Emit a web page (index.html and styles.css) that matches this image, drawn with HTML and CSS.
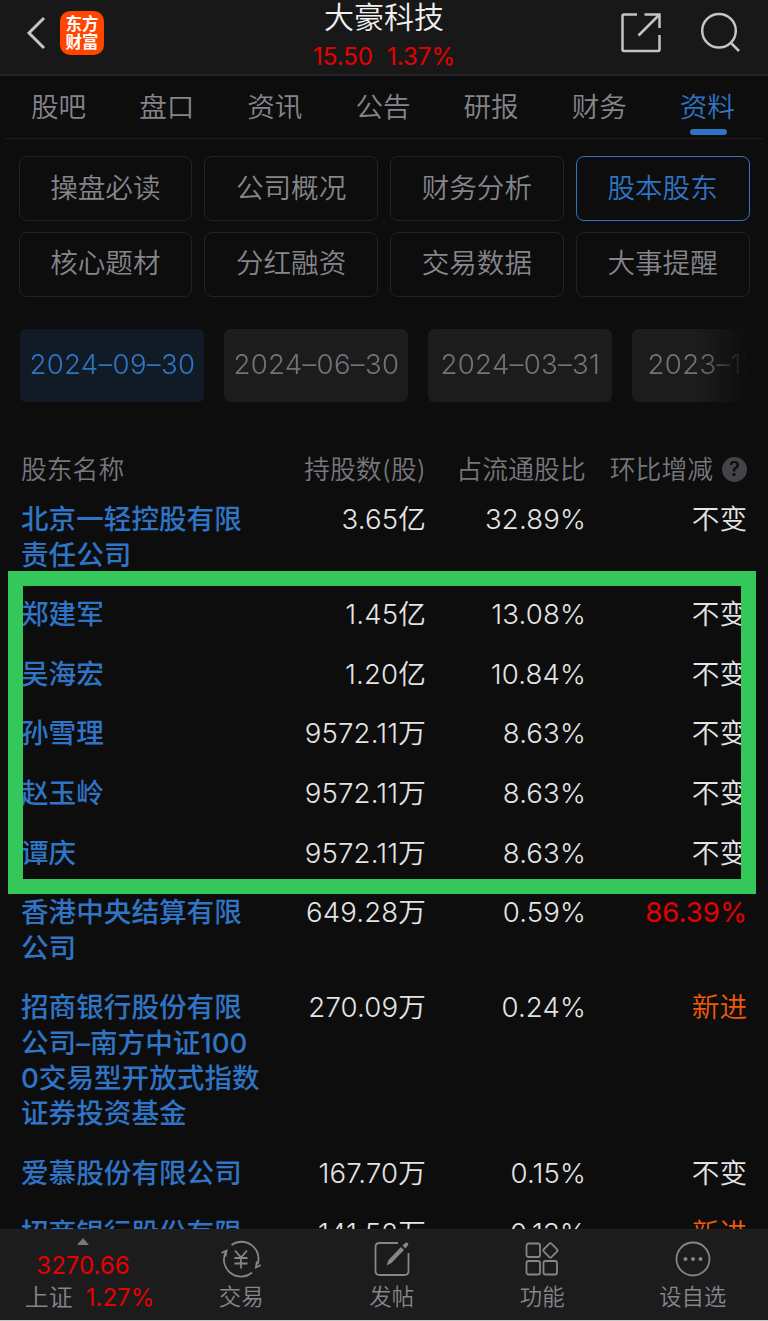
FILE: index.html
```html
<!DOCTYPE html>
<html lang="zh-CN">
<head>
  <meta charset="UTF-8" />
  <meta name="viewport" content="width=device-width, initial-scale=1.0" />
  <title>大豪科技 - 股本股东</title>
  <link rel="stylesheet" href="styles.css">
</head>
<body>
  <div class="app">
    <header class="header">
      <div class="header-side">
        <svg class="back" width="20" height="34" viewBox="0 0 20 34"><path d="M18 2L3 17l15 15" /></svg>
        <div class="logo"><span>东方</span><span>财富</span></div>
      </div>
      <div class="stock">
        <h1>大豪科技</h1>
        <p><span>15.50</span><span>1.37%</span></p>
      </div>
      <div class="header-side right">
        <svg class="icon" width="42" height="42" viewBox="0 0 42 42"><path d="M17 2.500H4Q2.500 2.500 2.500 4V37.500Q2.500 39 4 39H38Q39.500 39 39.500 37.500V23M24.500 2.500H39.500V16M39 3L18.500 23.500" /></svg>
        <svg class="icon" width="42" height="42" viewBox="0 0 42 42"><circle cx="19" cy="18.800" r="16.800" /><path d="M30.500 30.500L39 39" /></svg>
      </div>
    </header>

    <nav class="tabs">
      <a>股吧</a>
      <a>盘口</a>
      <a>资讯</a>
      <a>公告</a>
      <a>研报</a>
      <a>财务</a>
      <a class="active">资料</a>
    </nav>

    <div class="menu">
      <button>操盘必读</button>
      <button>公司概况</button>
      <button>财务分析</button>
      <button class="active">股本股东</button>
      <button>核心题材</button>
      <button>分红融资</button>
      <button>交易数据</button>
      <button>大事提醒</button>
    </div>

    <div class="dates">
      <span class="date active">2024–09–30</span>
      <span class="date">2024–06–30</span>
      <span class="date">2024–03–31</span>
      <span class="date">2023–12–31</span>
    </div>

    <main class="holders">
      <div class="row head">
        <span>股东名称</span>
        <span>持股数(股)</span>
        <span>占流通股比</span>
        <span class="change">环比增减<i class="help">?</i></span>
      </div>
      <div class="row"><span class="name">北京一轻控股有限责任公司</span><span>3.65亿</span><span>32.89%</span><span>不变</span></div>
      <div class="marked">
        <div class="row"><span class="name">郑建军</span><span>1.45亿</span><span>13.08%</span><span>不变</span></div>
        <div class="row"><span class="name">吴海宏</span><span>1.20亿</span><span>10.84%</span><span>不变</span></div>
        <div class="row"><span class="name">孙雪理</span><span>9572.11万</span><span>8.63%</span><span>不变</span></div>
        <div class="row"><span class="name">赵玉岭</span><span>9572.11万</span><span>8.63%</span><span>不变</span></div>
        <div class="row"><span class="name">谭庆</span><span>9572.11万</span><span>8.63%</span><span>不变</span></div>
      </div>
      <div class="row"><span class="name">香港中央结算有限公司</span><span>649.28万</span><span>0.59%</span><span class="up">86.39%</span></div>
      <div class="row"><span class="name">招商银行股份有限公司–南方中证1000交易型开放式指数证券投资基金</span><span>270.09万</span><span>0.24%</span><span class="new">新进</span></div>
      <div class="row"><span class="name">爱慕股份有限公司</span><span>167.70万</span><span>0.15%</span><span>不变</span></div>
      <div class="row"><span class="name">招商银行股份有限</span><span>141.52万</span><span>0.13%</span><span class="new">新进</span></div>
    </main>

    <footer class="footer">
      <div class="index">
        <i class="arrow"></i>
        <span class="up">3270.66</span>
        <span class="market">上证<b class="up">1.27%</b></span>
      </div>
      <div class="item">
        <svg width="42" height="38" viewBox="0 0 42 38"><path d="M11.500 5A17 17 0 0 1 37.500 24.500M40.800 25L36 27.500L36.800 21.500M32 32.500A17 17 0 0 1 6 11.500M1.500 13L6.500 10.500L5.500 16.500M15 10.500l6 7 6-7M14.500 18h13M14.500 23.500h13M21 17.500v11" /></svg>
        <span>交易</span>
      </div>
      <div class="item">
        <svg width="42" height="38" viewBox="0 0 42 38"><path d="M27 3H8.500Q4.500 3 4.500 7V31Q4.500 35 8.500 35H33.500Q37.500 35 37.500 31V13" /><path class="fill" d="M15.500 25.500l2-5.500L30 7l3 3L20.500 23zM31.500 5.500L34.500 2.800q1-.8 2.200.3t.3 2.200L34.500 8.500z" /></svg>
        <span>发帖</span>
      </div>
      <div class="item">
        <svg width="42" height="38" viewBox="0 0 42 38"><rect x="5.500" y="3.500" width="13.500" height="13.500" rx="2" /><rect x="5.500" y="21" width="13.500" height="13.500" rx="2" /><rect x="22.500" y="21" width="13.500" height="13.500" rx="2" /><rect x="23.900" y="4.900" width="11" height="11" rx="1.500" transform="rotate(45 29.400 10.400)" /></svg>
        <span>功能</span>
      </div>
      <div class="item">
        <svg width="42" height="38" viewBox="0 0 42 38"><circle cx="21" cy="19" r="16.500" /><g class="fill"><circle cx="13.500" cy="19" r="2" /><circle cx="21" cy="19" r="2" /><circle cx="28.500" cy="19" r="2" /></g></svg>
        <span>设自选</span>
      </div>
    </footer>
  </div>
</body>
</html>
```
FILE: styles.css
```css
*,
*::after {
  box-sizing: border-box;
}
body {
  margin: 0;
  background: #0d0d0d;
  color: #e4e4e4;
  font-family: Inter, "Noto Sans CJK SC", sans-serif;
  font-size: 27.6px;
  font-weight: 350;
}
.app {
  display: flex;
  flex-direction: column;
  height: 1321px;
  overflow: hidden;
}
.header {
  display: flex;
  justify-content: space-between;
  height: 76px;
  flex: none;
  padding: 0 26px;
  background: #181818;
  border-bottom: 2px solid #262626;
}
.header-side {
  display: flex;
  align-items: center;
  width: 200px;
  height: 65px;
  gap: 14px;
}
.header-side.right {
  justify-content: flex-end;
  gap: 38px;
}
svg {
  fill: none;
  flex: none;
}
.back {
  stroke: #c4c4c4;
  stroke-width: 3;
}
.icon {
  stroke: #c4c4c4;
  stroke-width: 2.5;
}
.logo {
  display: flex;
  flex-direction: column;
  justify-content: center;
  align-items: center;
  width: 44px;
  height: 44px;
  border-radius: 10px;
  background: #ff4500;
  color: #fff;
  font-size: 16.5px;
  font-weight: 700;
  line-height: 18px;
}
.stock {
  text-align: center;
}
.stock h1 {
  margin: 0;
  font-size: 30px;
  font-weight: 350;
  line-height: 35px;
  color: #f0f0f0;
}
.stock p {
  display: flex;
  justify-content: center;
  gap: 14px;
  margin: 8px 0 0;
  font-size: 24px;
  font-weight: 400;
  line-height: 28px;
  color: #e60000;
}
.tabs {
  display: flex;
  flex: none;
  justify-content: space-between;
  height: 63px;
  margin: 0 5px;
  padding: 0 28px 0 26px;
  border-bottom: 1px solid #1c1c1c;
  color: #85858b;
  line-height: 62px;
}
.tabs .active {
  position: relative;
  color: #2f74c5;
}
.tabs .active::after {
  content: "";
  position: absolute;
  left: 10px;
  top: 53px;
  width: 37px;
  height: 6px;
  border-radius: 3px;
  background: #2f74c5;
}
.menu {
  display: grid;
  grid-template-columns: repeat(4, 1fr);
  gap: 10.500px 12px;
  padding: 17px 18.5px 0;
}
.menu button {
  height: 65px;
  padding: 0 0 6px;
  border: 1px solid #232323;
  border-radius: 8px;
  background: none;
  color: #85858b;
  font: inherit;
}
.menu .active {
  border-color: #2f74c5;
  color: #2f74c5;
}
.dates {
  display: flex;
  flex: none;
  gap: 20px;
  margin: 32.500px 18px 0 20.4px;
  overflow: hidden;
  mask-image: linear-gradient(to right, #000 680px, transparent 728px);
}
.date {
  flex: none;
  width: 184px;
  height: 73px;
  border-radius: 6px;
  background: #1c1c1c;
  color: #757079;
  letter-spacing: 0.3px;
  text-align: center;
  line-height: 70px;
}
.date.active {
  background: #111b26;
  color: #2f74c5;
}
.holders {
  flex: 1;
  min-height: 0;
  overflow: hidden;
  padding: 49.500px 21px 0;
}
.row {
  display: grid;
  grid-template-columns: 241px 164px 160px 161px;
  padding-bottom: 24.2px;
  line-height: 35.4px;
  text-align: right;
}
.row > :first-child {
  text-align: left;
}
.row > :nth-child(2),
.row > :nth-child(3) {
  letter-spacing: 0.15px;
}
.row.head {
  padding-bottom: 15.3px;
  color: #77777d;
  font-size: 25.8px;
}
.name {
  color: #2f74c5;
  font-weight: 500;
  word-break: break-all;
}
.change {
  display: flex;
  justify-content: flex-end;
  align-items: center;
  gap: 9px;
}
.help {
  width: 25px;
  height: 25px;
  border-radius: 50%;
  background: #444448;
  color: #0d0d0d;
  font-size: 20px;
  font-style: normal;
  font-weight: 600;
  line-height: 25px;
  text-align: center;
}
.marked {
  position: relative;
}
/* green frame drawn over the highlighted holders */
.marked::after {
  content: "";
  position: absolute;
  top: -26px;
  left: -13px;
  width: 748px;
  height: 323px;
  border: 15px solid #34c759;
}
.up {
  color: #e60000;
  font-weight: 400;
}
.new {
  color: #f05a0a;
}
.footer {
  display: grid;
  grid-template-columns: 166px repeat(4, 150.5px);
  flex: none;
  height: 92px;
  background: #1c1c1c;
  border-top: 1px solid #222;
  border-bottom: 1px solid #c8c8c8;
  color: #85858b;
  font-size: 24px;
}
.index,
.item {
  display: flex;
  flex-direction: column;
  align-items: center;
}
.index {
  line-height: 32px;
}
.market {
  padding-left: 13px;
}
.index b {
  margin-left: 13px;
  font-weight: 400;
}
.arrow {
  margin: 8px 0 5px;
  border: 6px solid transparent;
  border-top: 0;
  border-bottom: 7px solid #77777d;
}
.item {
  padding-top: 10px;
  font-size: 22.4px;
  line-height: 38px;
}
.item svg {
  stroke: #85858b;
  stroke-width: 1.8;
}
.item .fill {
  fill: #85858b;
  stroke: none;
}
```
